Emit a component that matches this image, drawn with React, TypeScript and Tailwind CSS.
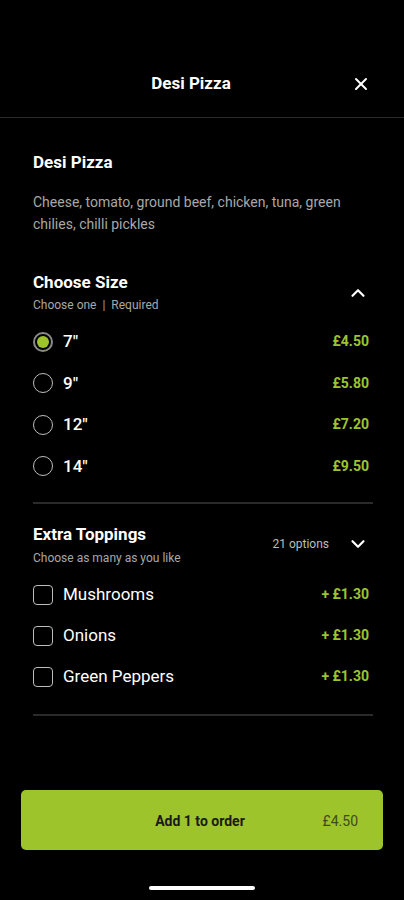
import { X, ChevronUp, ChevronDown } from 'lucide-react';

const sizes = [
  { label: '7"', price: '£4.50', selected: true },
  { label: '9"', price: '£5.80', selected: false },
  { label: '12"', price: '£7.20', selected: false },
  { label: '14"', price: '£9.50', selected: false },
];

const toppings = ['Mushrooms', 'Onions', 'Green Peppers'];

export default function App() {
  return (
    <div
      className="min-h-screen h-[900px] flex flex-col bg-black text-white"
      style={{ fontFamily: 'Roboto, "Noto Sans", sans-serif' }}
    >
      {/* Header */}
      <div className="h-[118px] pt-[51px] pr-[22px] border-b border-[#2b2b2b] flex items-center justify-center relative">
        <span className="text-[17px] font-bold">Desi Pizza</span>
        <X className="absolute right-[33px] top-[74px] w-[20px] h-[20px]" strokeWidth={2.4} />
      </div>

      {/* Body */}
      <div className="px-[33px] pr-[31px]">
        <h1 className="mt-[32px] text-[17px] leading-[24px] font-bold">Desi Pizza</h1>
        <p className="mt-[17px] text-[14px] leading-[22px] text-[#a8a8a8] pr-[20px]">
          Cheese, tomato, ground beef, chicken, tuna, green chilies, chilli pickles
        </p>

        {/* Choose Size */}
        <div className="mt-[35px] flex items-center justify-between">
          <div>
            <h2 className="text-[17px] leading-[24px] font-bold">Choose Size</h2>
            <p className="mt-[3px] text-[12px] leading-[16px] text-[#a8a8a8]">Choose one&nbsp; | &nbsp;Required</p>
          </div>
          <ChevronUp className="w-[22px] h-[22px] mr-[4px] mt-[2px]" strokeWidth={2.4} />
        </div>
        <div className="mt-[8px]">
          {sizes.map((s) => (
            <div key={s.label} className="h-[41.5px] flex items-center justify-between">
              <div className="flex items-center gap-[10px]">
                {s.selected ? (
                  <span className="w-[20px] h-[20px] rounded-full border-2 border-[#8a8a8a] flex items-center justify-center">
                    <span className="w-[12px] h-[12px] rounded-full bg-[#9dc42d]" />
                  </span>
                ) : (
                  <span className="w-[20px] h-[20px] rounded-full border-[1.5px] border-[#bdbdbd]" />
                )}
                <span className="text-[17px] font-medium">{s.label}</span>
              </div>
              <span className="text-[14px] font-bold text-[#9dc42d] pr-[4px]">{s.price}</span>
            </div>
          ))}
        </div>
        <div className="mt-[15px] h-[2px] bg-[#2a2a2a]" />

        {/* Extra Toppings */}
        <div className="mt-[18px] flex items-center justify-between">
          <div>
            <h2 className="text-[17px] leading-[24px] font-bold">Extra Toppings</h2>
            <p className="mt-[4px] text-[12px] leading-[16px] text-[#a8a8a8]">Choose as many as you like</p>
          </div>
          <div className="flex items-center gap-[18px] mr-[4px]">
            <span className="text-[12px] text-[#bdbdbd]">21 options</span>
            <ChevronDown className="w-[22px] h-[22px]" strokeWidth={2.4} />
          </div>
        </div>
        <div className="mt-[8px]">
          {toppings.map((t) => (
            <div key={t} className="h-[41px] flex items-center justify-between">
              <div className="flex items-center gap-[10px]">
                <span className="w-[20px] h-[20px] rounded-[4px] border-[1.5px] border-[#bdbdbd]" />
                <span className="text-[17px]">{t}</span>
              </div>
              <span className="text-[14px] font-bold text-[#9dc42d] pr-[4px]">+ £1.30</span>
            </div>
          ))}
        </div>
        <div className="mt-[17px] h-[2px] bg-[#2a2a2a]" />
      </div>

      <div className="flex-1" />

      {/* Footer */}
      <div className="px-[21px]">
        <button className="w-full h-[60px] rounded-[5px] bg-[#9dc42b] flex items-center relative">
          <span className="flex-1 text-center text-[14px] font-bold text-[#1a1a1a] pr-[4px] pt-[2px]">Add 1 to order</span>
          <span className="absolute right-[25px] text-[14px] text-[#3d4a1a] pt-[2px]">£4.50</span>
        </button>
      </div>
      <div className="mt-[36px] mb-[10px] flex justify-center">
        <div className="w-[106px] h-[4px] rounded-full bg-white" />
      </div>
    </div>
  );
}
